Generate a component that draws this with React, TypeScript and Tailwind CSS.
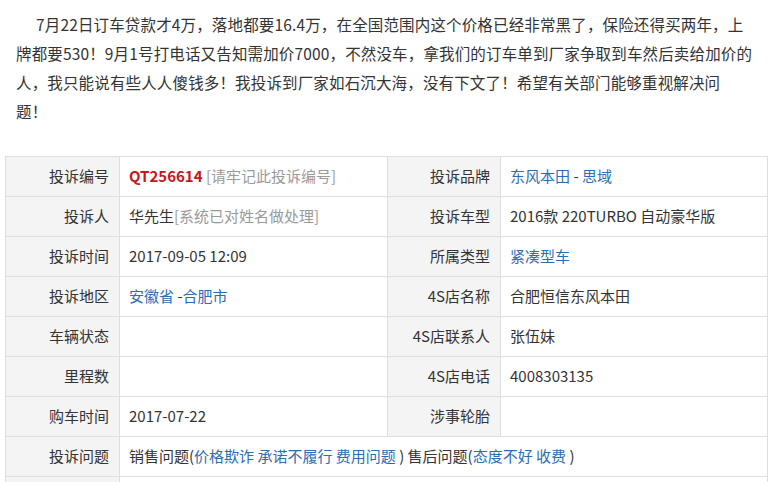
import React from "react";

const font = { fontFamily: '"Noto Sans CJK SC", "Noto Sans", sans-serif' };

const Label: React.FC<{ children?: React.ReactNode }> = ({ children }) => (
  <td className="h-[40px] border border-[#dedede] bg-[#f4f4f4] pr-[10px] text-right text-[#333] whitespace-nowrap">
    {children}
  </td>
);

const Value: React.FC<{ children?: React.ReactNode; span?: number }> = ({ children, span }) => (
  <td colSpan={span} className="h-[40px] border border-[#dedede] bg-white pl-[9px] text-left text-[#333] whitespace-nowrap">
    {children}
  </td>
);

const Link: React.FC<{ children: React.ReactNode }> = ({ children }) => (
  <span className="text-[#2a6db5]">{children}</span>
);

const Hint: React.FC<{ children: React.ReactNode }> = ({ children }) => (
  <span className="text-[#9a9a9a]">{children}</span>
);

export default function App() {
  const lines = [
    "7月22日订车贷款才4万，落地都要16.4万，在全国范围内这个价格已经非常黑了，保险还得买两年，上",
    "牌都要530！9月1号打电话又告知需加价7000，不然没车，拿我们的订车单到厂家争取到车然后卖给加价的",
    "人，我只能说有些人人傻钱多！我投诉到厂家如石沉大海，没有下文了！希望有关部门能够重视解决问",
    "题！",
  ];

  return (
    <div className="h-[482px] w-[780px] overflow-hidden bg-white" style={font}>
      {/* Complaint text */}
      <div className="pl-[16px] pt-[10px] text-[15.5px] leading-[29px] tracking-[0.15px] text-[#333]">
        {lines.map((l, i) => (
          <div key={i} className={i === 0 ? "whitespace-nowrap pl-[20px]" : "whitespace-nowrap"}>
            {l}
          </div>
        ))}
      </div>

      {/* Details table */}
      <table className="ml-[5px] mt-[30px] w-[762px] table-fixed border-collapse text-[15px]">
        <colgroup>
          <col className="w-[114px]" />
          <col className="w-[268px]" />
          <col className="w-[113px]" />
          <col className="w-[267px]" />
        </colgroup>
        <tbody>
          <tr>
            <Label>投诉编号</Label>
            <Value>
              <span className="font-bold text-[#c8161e]">QT256614</span> <Hint>[请牢记此投诉编号]</Hint>
            </Value>
            <Label>投诉品牌</Label>
            <Value>
              <Link>东风本田</Link> - <Link>思域</Link>
            </Value>
          </tr>
          <tr>
            <Label>投诉人</Label>
            <Value>
              华先生<Hint>[系统已对姓名做处理]</Hint>
            </Value>
            <Label>投诉车型</Label>
            <Value>2016款 220TURBO 自动豪华版</Value>
          </tr>
          <tr>
            <Label>投诉时间</Label>
            <Value>2017-09-05 12:09</Value>
            <Label>所属类型</Label>
            <Value>
              <Link>紧凑型车</Link>
            </Value>
          </tr>
          <tr>
            <Label>投诉地区</Label>
            <Value>
              <Link>安徽省</Link> -<Link>合肥市</Link>
            </Value>
            <Label>4S店名称</Label>
            <Value>合肥恒信东风本田</Value>
          </tr>
          <tr>
            <Label>车辆状态</Label>
            <Value />
            <Label>4S店联系人</Label>
            <Value>张伍妹</Value>
          </tr>
          <tr>
            <Label>里程数</Label>
            <Value />
            <Label>4S店电话</Label>
            <Value>4008303135</Value>
          </tr>
          <tr>
            <Label>购车时间</Label>
            <Value>2017-07-22</Value>
            <Label>涉事轮胎</Label>
            <Value />
          </tr>
          <tr>
            <Label>投诉问题</Label>
            <Value span={3}>
              销售问题(<Link>价格欺诈 承诺不履行 费用问题</Link> ) 售后问题(<Link>态度不好 收费</Link> )
            </Value>
          </tr>
          <tr>
            <Label />
            <Value span={3} />
          </tr>
        </tbody>
      </table>
    </div>
  );
}
